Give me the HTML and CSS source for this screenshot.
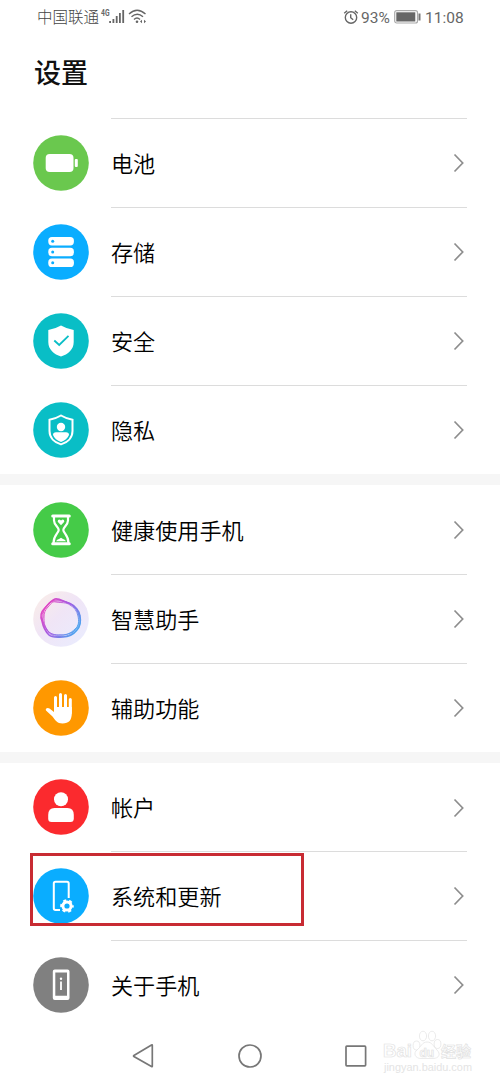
FILE: index.html
```html
<!DOCTYPE html>
<html lang="zh-CN">
<head>
<meta charset="utf-8">
<title>设置</title>
<link rel="stylesheet" href="styles.css">
</head>
<body>
<svg class="defs" width="0" height="0">
  <symbol id="chevron" viewBox="0 0 12 20"><path d="M1.5 1.5 9.7 10 1.5 18.5" fill="none" stroke="#8d8d8d" stroke-width="1.7"/></symbol>
</svg>
<div class="phone">
  <header class="status">
    <span class="carrier">中国联通</span>
    <svg class="signal" width="50" height="18" viewBox="0 0 50 18">
      <text class="net" x="1" y="7.500" textLength="8.500" lengthAdjust="spacingAndGlyphs">4G</text>
      <g fill="#666"><rect x="9.2" y="13" width="1.8" height="2"/><rect x="12.5" y="11" width="1.8" height="4"/><rect x="15.8" y="8" width="1.8" height="7"/><rect x="19" y="5" width="1.8" height="10"/><rect x="22.3" y="2" width="1.8" height="13"/></g>
      <g fill="none" stroke="#666" stroke-width="1.4"><path d="M29 6Q37-1.5 45.500 6M31.500 8.800Q37.300 3.500 43 8.800M34 11.500Q37 8.500 40 11.500"/></g>
      <circle cx="37" cy="13.700" r="1.300" fill="#666"/><path d="m40 13.500 2-1.800v3.600zM46 13.500l-2-1.800v3.600z" fill="#666"/>
    </svg>
    <svg class="alarm" width="16" height="16" viewBox="0 0 16 16" fill="none" stroke="#666" stroke-width="1.4"><circle cx="8" cy="8.500" r="5.700"/><path d="M1.200 4.200 4.200 1.700M11.800 1.700l3 2.500M7.700 5.200v3.500l2.500 2.100"/></svg>
    <span class="percent">93%</span>
    <svg class="battery" width="28" height="14" viewBox="0 0 28 14"><rect x=".7" y=".7" width="22.800" height="12.300" rx="2" fill="#fff" stroke="#aaa" stroke-width="1.200"/><rect x="2.300" y="2.300" width="19" height="9.200" fill="#666"/><path d="M25.500 3.500v7" stroke="#777" stroke-width="2"/></svg>
    <time class="clock">11:08</time>
  </header>
  <h1 class="title">设置</h1>

  <section class="group">
    <div class="row">
      <svg class="icon" viewBox="-28 -28 56 56"><circle r="27.800" fill="#6ac84e"/><rect x="-15.300" y="-8.900" width="27.800" height="17.800" rx="4" fill="#fff"/><rect x="13.800" y="-4" width="3" height="8" rx="1" fill="#fff"/></svg>
      <div class="body"><span>电池</span><svg class="chev"><use href="#chevron"/></svg></div>
    </div>
    <div class="row">
      <svg class="icon" viewBox="-28 -28 56 56"><circle r="27.800" fill="#0aadff"/><g fill="#fff"><rect x="-12.700" y="-15" width="25.600" height="8.400" rx="3.600"/><rect x="-12.700" y="-4.200" width="25.600" height="8.400" rx="3.600"/><rect x="-12.700" y="6.600" width="25.600" height="8.400" rx="3.600"/></g><g fill="#0aadff"><circle cx="-8.300" cy="-10.800" r="1.500"/><circle cx="-8.300" cy="0" r="1.500"/><circle cx="-8.300" cy="10.800" r="1.500"/></g></svg>
      <div class="body"><span>存储</span><svg class="chev"><use href="#chevron"/></svg></div>
    </div>
    <div class="row">
      <svg class="icon" viewBox="-28 -28 56 56"><circle r="27.800" fill="#09bec6"/><path d="M0-15.500Q5-12.500 12.700-11V1C12.700 8.500 7 13.500 0 15.500-7 13.500-12.700 8.500-12.700 1V-11Q-5-12.500 0-15.500Z" fill="#fff"/><path d="M-6.700-.5-1.800 4 7.500-5.200" fill="none" stroke="#09bec6" stroke-width="1.800"/></svg>
      <div class="body"><span>安全</span><svg class="chev"><use href="#chevron"/></svg></div>
    </div>
    <div class="row">
      <svg class="icon" viewBox="-28 -28 56 56"><circle r="27.800" fill="#09bec6"/><path d="M0-14.500Q5-11.500 11.500-10.200V1C11.500 7.700 6.500 12.500 0 14.400-6.500 12.500-11.500 7.700-11.500 1V-10.200Q-5-11.500 0-14.500Z" fill="none" stroke="#fff" stroke-width="2"/><circle cy="-3" r="4.200" fill="#fff"/><path d="M-8 5Q-8 2.200-5 2.200H5Q8 2.200 8 5 6 10 0 12-6 10-8 5Z" fill="#fff"/></svg>
      <div class="body"><span>隐私</span><svg class="chev"><use href="#chevron"/></svg></div>
    </div>
  </section>

  <section class="group">
    <div class="row">
      <svg class="icon" viewBox="-28 -28 56 56"><circle r="27.800" fill="#45cb48"/><g fill="none" stroke="#fff" stroke-width="2.200" stroke-linejoin="round"><path d="M-7-13V-9.500C-7-5-2.300-3-2.300 0S-7.500 5-7.500 13M7-13V-9.500C7-5 2.300-3 2.300 0S7.500 5 7.500 13"/></g><path d="M-8.300-14H8.300M-8.300 13.800H8.300" stroke="#fff" stroke-width="3" stroke-linecap="round"/><path d="M0-4.800-3.300-8.200Q-3.500-10.500-1.500-10.500L0-9.500 1.500-10.500Q3.500-10.500 3.300-8.200ZM-5 11.300Q-4 9.500-2 9L0 7.800 2 9Q4 9.500 5 11.300Z" fill="#fff"/></svg>
      <div class="body"><span>健康使用手机</span><svg class="chev"><use href="#chevron"/></svg></div>
    </div>
    <div class="row">
      <svg class="icon" viewBox="-28 -28 56 56">
        <defs><linearGradient id="halo" x1="0" y1="0" x2="1" y2="1"><stop stop-color="#fbeee6"/><stop offset=".45" stop-color="#f0e5f6"/><stop offset="1" stop-color="#e9edff"/></linearGradient><linearGradient id="ring" x1="0" y1=".15" x2="1" y2=".8"><stop stop-color="#ed42bd"/><stop offset=".48" stop-color="#a35be3"/><stop offset="1" stop-color="#42aaf0"/></linearGradient></defs>
        <circle r="27.800" fill="url(#halo)"/>
        <g fill="none" stroke="url(#ring)" stroke-width=".9">
          <path d="M-6-20C-2-21 3-17 9-15.500 14-13.500 19-7 19-3 20 3 19 8 16 11 12 16 7 18 2 18-3 18-9 19-12 16-16 12-18 7-19 2-21-3-20-7-17-10-13-14-11-18-6-20Z" stroke-width="1.600"/>
          <path d="M-5-19C1-19 7-17 12-13 17-9 18-4 19.500 0 20 6 16 10 12 13 8 17 4 18-1 17.500-7 18-11 16-14 11-17 7-19 4-18-2-18-7-17-11-13-15-10-18-8-19-5-19Z"/>
          <path d="M-6-18C0-18 5-18 10-15 15-12 17-7 18-2 19 4 17 8 13 12 9 15 4 16-1 16-6 17-10 15-13 12-16 8-18 3-19-1-20-6-16-10-14-13-11-17-9-18-6-18Z"/>
          <path d="M-5-17C1-16 5-17 9-14 13-12 16-8 17-3 18 2 18 7 14 10 10 14 5 17-1 16-6 16-12 15-14 11-17 6-17 3-17-2-17-6-16-9-13-12-10-15-9-18-5-17Z"/>
        </g>
      </svg>
      <div class="body"><span>智慧助手</span><svg class="chev"><use href="#chevron"/></svg></div>
    </div>
    <div class="row">
      <svg class="icon" viewBox="-28 -28 56 56"><circle r="27.800" fill="#ff9800"/><g fill="none" stroke="#fff" stroke-width="3" stroke-linecap="round"><path d="M-5.500-10.500V3M-.5-13.500V3M4.500-12.500V3M9.300-8.500V5"/></g><path d="M-7-1H10.800V5C10.800 12 8 15.500 1.500 15.500-4 15.500-6 12-8.500 8.500L-15 2.500C-16 .5-13.500-1-11.500.5L-7 4Z" fill="#fff"/></svg>
      <div class="body"><span>辅助功能</span><svg class="chev"><use href="#chevron"/></svg></div>
    </div>
  </section>

  <section class="group">
    <div class="row short">
      <svg class="icon" viewBox="-28 -28 56 56"><circle r="27.800" fill="#fb2a2e"/><circle cy="-7.800" r="7" fill="#fff"/><path d="M-6.500 1H6.500Q12.800 1 12.800 8V11.500Q12.800 15 9.500 15H-9.500Q-12.800 15-12.800 11.500V8Q-12.800 1-6.500 1Z" fill="#fff"/></svg>
      <div class="body"><span>帐户</span><svg class="chev"><use href="#chevron"/></svg></div>
    </div>
    <div class="row marked">
      <svg class="icon" viewBox="-28 -28 56 56"><circle r="27.800" fill="#0aadff"/><path d="M-1 14H-5.500Q-7.200 14-7.200 12.300V-12.500Q-7.200-14.200-5.500-14.200H6Q7.700-14.200 7.700-12.500V2" fill="none" stroke="#fff" stroke-width="2"/><circle cx="6" cy="10" r="4.100" fill="none" stroke="#fff" stroke-width="3"/><circle cx="6" cy="10" r="5.800" fill="none" stroke="#fff" stroke-width="2" stroke-dasharray="3.037 3.037" stroke-dashoffset="1.518"/></svg>
      <div class="body"><span>系统和更新</span><svg class="chev"><use href="#chevron"/></svg></div>
    </div>
    <div class="row">
      <svg class="icon" viewBox="-28 -28 56 56"><circle r="27.800" fill="#808080"/><path fill-rule="evenodd" d="M-6.200-15.500H6.500Q8.500-15.500 8.500-13.500V13Q8.500 15 6.500 15H-6.200Q-8.200 15-8.200 13V-13.500Q-8.200-15.500-6.200-15.500ZM-5.700-12.500V10.700H6V-12.500Z" fill="#fff"/><path d="M0-3.500V5" stroke="#fff" stroke-width="1.800"/><circle cy="-6.300" r="1.200" fill="#fff"/></svg>
      <div class="body"><span>关于手机</span><svg class="chev"><use href="#chevron"/></svg></div>
    </div>
  </section>

  <nav class="nav">
    <svg width="24" height="26" viewBox="0 0 24 26"><path d="M20.300 2.300V23.300Q20.300 24 19.500 23.600L1.900 13.500Q1.200 13 1.900 12.500L19.500 2Q20.300 1.600 20.300 2.300Z"/></svg>
    <svg width="26" height="26" viewBox="0 0 26 26"><circle cx="13" cy="13" r="11"/></svg>
    <svg width="24" height="26" viewBox="0 0 24 26"><rect x="2" y="3.200" width="19.600" height="19.600" rx=".8"/></svg>
  </nav>
  <svg class="watermark" width="100" height="52" viewBox="0 0 100 52">
    <g class="outline">
      <text x="2" y="30" class="bai" textLength="29" lengthAdjust="spacingAndGlyphs">Bai</text>
      <ellipse cx="35.500" cy="18.500" rx="3.400" ry="4.500"/><ellipse cx="42" cy="9" rx="3.600" ry="4.800"/><ellipse cx="51" cy="9" rx="3.600" ry="4.800"/><ellipse cx="56.500" cy="17" rx="3.400" ry="4.500"/>
      <path d="M46 15C41 15 40 20 36 23S34 31.500 40 31.500H52C58 31.500 60 27 56 23S51 15 46 15Z"/>
      <text x="38.500" y="29.500" class="du">du</text>
      <text x="60" y="30" class="jy">经验</text>
    </g>
    <text x="3" y="43.500" class="url" textLength="88" lengthAdjust="spacingAndGlyphs">jingyan.baidu.com</text>
  </svg>
</div>
</body>
</html>
```
FILE: styles.css
```css
*, *::after { box-sizing: border-box; }
body { margin: 0; background: #fff; }
.defs { position: absolute; }
.phone {
  position: relative;
  width: 500px;
  height: 1083px;
  overflow: hidden;
  color: #111;
  font-family: Roboto, "Noto Sans CJK SC", sans-serif;
}
.status {
  display: flex;
  align-items: center;
  height: 34px;
  padding: 0 36px 0 37px;
  font-size: 15.5px;
  color: #666;
  white-space: nowrap;
}
.carrier { line-height: 22px; width: 63px; padding-top: 2px; font-weight: 300; color: #444; }
.signal { flex: none; }
.net { font: 700 9px Roboto, sans-serif; fill: #666; }
.alarm { margin-left: auto; margin-right: 2px; }
.percent { width: 32px; padding-top: 1px; }
.battery { margin: 0 3px 0 1px; }
.clock { width: 39px; padding-top: 1px; }
.title {
  margin: 0;
  height: 84px;
  padding: 20px 0 0 34px;
  font-size: 27px;
  line-height: 40px;
  font-weight: 500;
  color: #111;
}
.group + .group { border-top: 11px solid #f6f6f6; }
.row {
  display: flex;
  align-items: center;
  height: 89px;
  padding: 0 33px 0 33px;
}
.row.short { height: 88px; }
.icon { width: 56px; height: 56px; flex: none; margin-right: 22px; }
.body {
  flex: 1;
  height: 100%;
  display: flex;
  align-items: center;
  justify-content: space-between;
  border-top: 1px solid #dcdcdc;
  font-size: 22.100px;
  font-weight: 350;
  line-height: 32px;
  color: #000;
}
.body span { padding-top: 1px; }
.group + .group .row:first-child .body { border-top-color: transparent; }
.chev { width: 12px; height: 20px; margin-right: 2px; }
.marked { position: relative; }
.marked::after {
  content: "";
  position: absolute;
  left: 30px;
  top: 2px;
  width: 274px;
  height: 73px;
  border: 3px solid #c82b33;
}
.nav {
  display: flex;
  justify-content: space-between;
  padding: 14px 132px 0 132px;
}
.nav svg { fill: none; stroke: #777; stroke-width: 1.700; }
.watermark { position: absolute; left: 381px; top: 1027px; }
.outline { fill: #fff; stroke: #e2e2e2; stroke-width: 0.7; }
.bai { font: 700 19px "Liberation Sans", sans-serif; }
.du { font: 700 12px "Liberation Sans", sans-serif; }
.jy { font: 700 15px "Noto Sans CJK SC", sans-serif; }
.url { font: 10px "Liberation Sans", sans-serif; fill: #e4e4e4; }
```
